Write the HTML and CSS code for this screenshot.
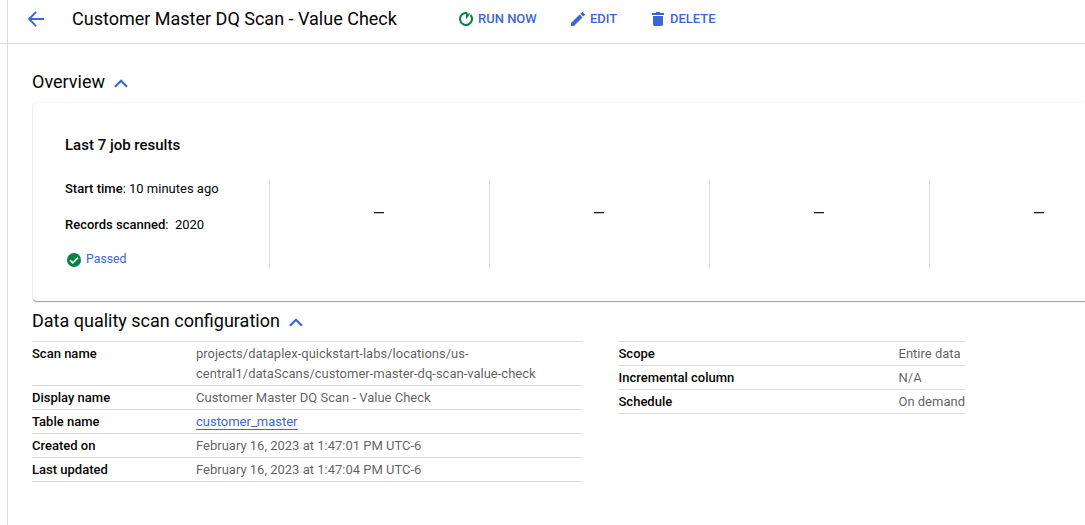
FILE: index.html
```html
<!DOCTYPE html>
<html lang="en">
<head>
<meta charset="utf-8">
<title>Customer Master DQ Scan - Value Check</title>
<link rel="stylesheet" href="styles.css">
</head>
<body>
<div class="rail"><div class="rail-top"></div></div>
<main class="page">
  <header class="header">
    <svg class="back" viewBox="0 0 16 16"><path d="M8.1 .9 1.2 8l6.9 7.1M1.5 8H16" fill="none" stroke="currentColor" stroke-width="1.9"/></svg>
    <h1 class="title">Customer Master DQ Scan - Value Check</h1>
    <nav class="actions">
      <a class="action run"><svg class="icon green" viewBox="0 0 14 14"><path d="M8.2 1.1A6 6 0 1 0 11.5 3" fill="none" stroke="currentColor" stroke-width="2"/><path d="M7 1.6 11.3 1.6 7.6 6.8H7z" fill="currentColor"/></svg><span>RUN NOW</span></a>
      <a class="action edit"><svg class="icon" viewBox="3 3 18 18"><path fill="currentColor" d="M3 17.25V21h3.75L17.81 9.94l-3.75-3.75L3 17.25zM20.71 7.04a1 1 0 0 0 0-1.41l-2.34-2.34a1 1 0 0 0-1.41 0l-1.83 1.83 3.75 3.75 1.83-1.83z"/></svg><span>EDIT</span></a>
      <a class="action delete"><svg class="icon trash" viewBox="0 0 12 14"><path fill="currentColor" d="M0 1h3.5l.8-1h3.4l.8 1H12v2H0zM1 4h10v8.2A1.8 1.8 0 0 1 9.2 14H2.8A1.8 1.8 0 0 1 1 12.2z"/></svg><span>DELETE</span></a>
    </nav>
  </header>
  <section class="content">
    <h2 class="heading">Overview <svg class="chevron" viewBox="0 0 14 9"><path d="M1 7.7 7 1.7l6 6" fill="none" stroke="currentColor" stroke-width="2.2"/></svg></h2>
    <div class="card">
      <h3 class="card-title">Last 7 job results</h3>
      <div class="jobs">
        <div class="job latest">
          <p class="line"><b>Start time</b>: 10 minutes ago</p>
          <p class="line"><b>Records scanned</b>: &nbsp;2020</p>
          <a class="passed"><svg class="check" viewBox="0 0 14 14"><circle cx="7" cy="7" r="7" fill="currentColor"/><path d="M3 7.1 5.8 9.9 11.1 4.6" fill="none" stroke="#fff" stroke-width="1.6"/></svg><span>Passed</span></a>
        </div>
        <div class="job"><span class="dash"></span></div>
        <div class="job"><span class="dash"></span></div>
        <div class="job"><span class="dash"></span></div>
        <div class="job last"><span class="dash"></span></div>
      </div>
    </div>
    <h2 class="heading config">Data quality scan configuration <svg class="chevron" viewBox="0 0 14 9"><path d="M1 7.7 7 1.7l6 6" fill="none" stroke="currentColor" stroke-width="2.2"/></svg></h2>
    <div class="tables">
      <dl class="table main-table">
        <div class="row"><dt>Scan name</dt><dd>projects/dataplex-quickstart-labs/locations/us-<br>central1/dataScans/customer-master-dq-scan-value-check</dd></div>
        <div class="row"><dt>Display name</dt><dd>Customer Master DQ Scan - Value Check</dd></div>
        <div class="row"><dt>Table name</dt><dd><a class="link">customer_master</a></dd></div>
        <div class="row"><dt>Created on</dt><dd>February 16, 2023 at 1:47:01 PM UTC-6</dd></div>
        <div class="row"><dt>Last updated</dt><dd>February 16, 2023 at 1:47:04 PM UTC-6</dd></div>
      </dl>
      <dl class="table side-table">
        <div class="row"><dt>Scope</dt><dd>Entire data</dd></div>
        <div class="row"><dt>Incremental column</dt><dd>N/A</dd></div>
        <div class="row"><dt>Schedule</dt><dd>On demand</dd></div>
      </dl>
    </div>
  </section>
</main>
</body>
</html>
```
FILE: styles.css
```css
* { box-sizing: border-box; }
body {
  margin: 0;
  height: 525px;
  display: flex;
  overflow: hidden;
  background: #fff;
  color: #050505;
  font: 13px/20px Roboto, sans-serif;
}
h1, h2, h3, p, dl, dd { margin: 0; }
svg { flex: none; display: block; }
b, dt { font-weight: 500; }
.rail { width: 8px; flex: none; border-right: 1px solid #dcdcdc; }
.rail-top { height: 44px; border-bottom: 1px solid #dcdcdc; }
.page { flex: 1; min-width: 0; }
.header {
  height: 44px;
  padding: 0 0 6px 20px;
  display: flex;
  align-items: center;
  border-bottom: 1px solid #dcdcdc;
}
.back { width: 16px; height: 16px; color: #3b67d6; }
.title { margin-left: 28px; width: 387px; font-size: 18px; font-weight: 400; line-height: 24px; white-space: nowrap; }
.actions { display: flex; color: #3b67d6; font-weight: 500; }
.action { display: flex; align-items: center; white-space: nowrap; }
.icon { width: 14px; height: 14px; margin-right: 5px; }
.trash { width: 12px; margin-right: 6px; }
.green { color: #00853e; }
.run { width: 112px; }
.edit { width: 81px; }
.content { padding: 26px 0 0 24px; }
.heading { display: flex; align-items: center; height: 24px; font-size: 18px; font-weight: 400; line-height: 24px; }
.chevron { width: 14px; height: 9px; margin: 2px 0 0 9px; color: #3b67d6; }
.card {
  height: 198px;
  margin: 9px 0 0 1px;
  padding: 32px 0 32px 32px;
  border-radius: 4px 0 0 4px;
  box-shadow: 0 1px 1px rgba(0, 0, 0, .38), 0 0 2px rgba(0, 0, 0, .14);
}
.card-title { font-size: 15px; font-weight: 500; line-height: 20px; }
.jobs { display: flex; margin-top: 24px; height: 90px; }
.job { flex: none; width: 220px; padding: 33px 0 0 104px; border-left: 1px solid #dcdcdc; }
.latest { width: 204px; padding: 0; border: 0; }
.last { flex: 1; width: auto; }
.line { height: 36px; }
.dash { display: block; width: 10px; height: 1px; background: #202020; box-shadow: 0 1px #bbb; }
.passed { display: flex; align-items: center; margin: -2px 0 0 2px; font-size: 12.3px; color: #3b67d6; }
.check { width: 14px; height: 14px; margin: 1px 5px 0 0; color: #00853e; }
.config { margin-top: 8px; }
.tables { display: flex; margin-top: 8px; }
.table { border-top: 1px solid #dcdcdc; }
.main-table { width: 551px; }
.side-table { width: 347px; margin-left: 35px; align-self: flex-start; }
.row { display: flex; padding: 2px 0 1px; border-bottom: 1px solid #dcdcdc; }
.side-table .row { padding-left: .5px; }
dt { width: 164px; }
.side-table dt { width: 280px; }
dd { color: rgba(0, 0, 0, .65); white-space: nowrap; }
.link { display: inline-block; height: 18px; border-bottom: 1px solid; color: #3b67d6; }
```
